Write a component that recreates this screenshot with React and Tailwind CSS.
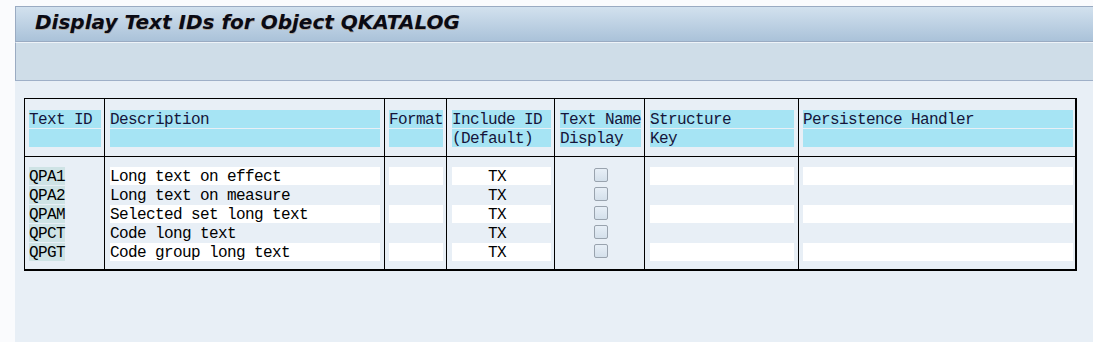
import React from "react";

const mono = { fontFamily: '"Liberation Mono", monospace' };

const rows = [
  { id: "QPA1", desc: "Long text on effect" },
  { id: "QPA2", desc: "Long text on measure" },
  { id: "QPAM", desc: "Selected set long text" },
  { id: "QPCT", desc: "Code long text" },
  { id: "QPGT", desc: "Code group long text" },
];

function Head({ a, b, px }) {
  return (
    <div className={"pt-[11px] pb-[9px] border-b border-black flex flex-col gap-[1px] " + px}>
      <div className="h-[18px] leading-[21px] bg-[#a6e4f4] whitespace-nowrap text-[#15153a]">{a}</div>
      <div className="h-[18px] leading-[21px] bg-[#a6e4f4] whitespace-nowrap text-[#15153a]">{b}</div>
    </div>
  );
}

function Body({ children, px }) {
  return <div className={"pt-[10px] pb-[8px] flex flex-col gap-[1px] " + px}>{children}</div>;
}

function Field({ i, children, extra = "" }) {
  return (
    <div
      className={
        "h-[18px] leading-[21px] whitespace-nowrap " +
        (i % 2 === 0 ? "bg-white " : "") +
        extra
      }
    >
      {children}
    </div>
  );
}

export default function App() {
  return (
    <div className="w-[1093px] h-[342px] bg-[#fafbfd] pl-[15px] pt-[6px] flex flex-col overflow-hidden">
      <div className="h-[36px] shrink-0 border-t border-l border-b border-[#9aabc2] bg-gradient-to-b from-[#d2e1ee] to-[#aac2d9] pl-[19px] pt-[3px]">
        <div
          className="text-[20px] leading-[24px] font-bold italic text-[#0a0a14] [text-shadow:0.5px_0.5px_0_rgba(170,100,20,0.35)]"
          style={{ fontFamily: '"DejaVu Sans", Verdana, sans-serif' }}
        >
          Display Text IDs for Object QKATALOG
        </div>
      </div>
      <div className="h-[39px] shrink-0 border-t border-t-[#eef3f8] border-l border-l-[#9aabc2] border-b border-b-[#9fb0c8] bg-[#cfdde8]" />
      <div className="flex-1 bg-[#e8eff6] pl-[9px] pt-[17px]">
        <div
          className="w-[1053px] flex border-l border-t border-black border-r-2 border-b-2 text-[16px] tracking-[-0.6px] text-black"
          style={mono}
        >
          {/* Text ID */}
          <div className="w-[79px]">
            <Head a="Text ID" b="" px="pl-[4px] pr-[3px]" />
            <Body px="pl-[4px] pr-[3px]">
              {rows.map((r, i) => (
                <div key={i} className="h-[18px] w-fit leading-[21px] whitespace-nowrap bg-[#cee3e5]">
                  {r.id}
                </div>
              ))}
            </Body>
          </div>
          {/* Description */}
          <div className="w-[280px] border-l border-black">
            <Head a="Description" b="" px="pl-[5px] pr-[4px]" />
            <Body px="pl-[5px] pr-[4px]">
              {rows.map((r, i) => (
                <Field key={i} i={i}>{r.desc}</Field>
              ))}
            </Body>
          </div>
          {/* Format */}
          <div className="w-[62px] border-l border-black">
            <Head a="Format" b="" px="pl-[4px] pr-[3px]" />
            <Body px="pl-[4px] pr-[3px]">
              {rows.map((r, i) => (
                <Field key={i} i={i} />
              ))}
            </Body>
          </div>
          {/* Include ID */}
          <div className="w-[108px] border-l border-black">
            <Head a="Include ID" b="(Default)" px="pl-[5px] pr-[3px]" />
            <Body px="pl-[5px] pr-[3px]">
              {rows.map((r, i) => (
                <Field key={i} i={i} extra="text-center pr-[9px]">TX</Field>
              ))}
            </Body>
          </div>
          {/* Text Name Display */}
          <div className="w-[90px] border-l border-black">
            <Head a="Text Name" b="Display" px="pl-[5px] pr-[3px]" />
            <Body px="pl-[5px] pr-[3px]">
              {rows.map((r, i) => (
                <div key={i} className="h-[18px] pt-[1px]">
                  <div className="w-[14px] h-[14px] mx-auto border border-[#99a3ae] rounded-[2px] bg-gradient-to-b from-[#e7eff7] to-[#d4e0eb]" />
                </div>
              ))}
            </Body>
          </div>
          {/* Structure Key */}
          <div className="w-[154px] border-l border-black">
            <Head a="Structure" b="Key" px="pl-[5px] pr-[4px]" />
            <Body px="pl-[5px] pr-[4px]">
              {rows.map((r, i) => (
                <Field key={i} i={i} />
              ))}
            </Body>
          </div>
          {/* Persistence Handler */}
          <div className="w-[277px] border-l border-black">
            <Head a="Persistence Handler" b="" px="pl-[4px] pr-[2px]" />
            <Body px="pl-[4px] pr-[2px]">
              {rows.map((r, i) => (
                <Field key={i} i={i} />
              ))}
            </Body>
          </div>
        </div>
      </div>
    </div>
  );
}
